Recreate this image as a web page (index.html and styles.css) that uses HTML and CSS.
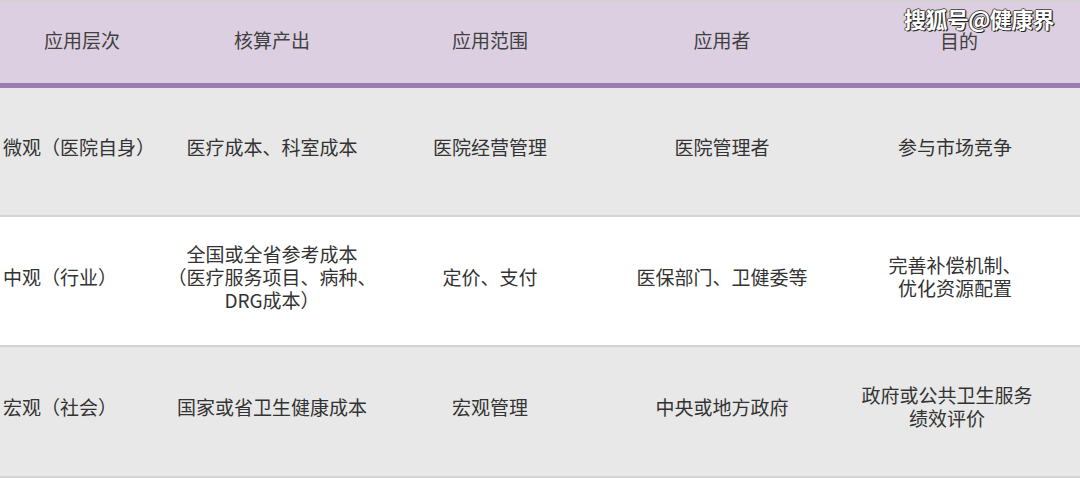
FILE: index.html
```html
<!DOCTYPE html>
<html lang="zh-CN">
<head>
<meta charset="utf-8">
<link rel="stylesheet" href="styles.css">
</head>
<body>
<div class="page">
  <table class="grid">
    <colgroup>
      <col class="c1"><col class="c2"><col class="c3"><col class="c4"><col class="c5">
    </colgroup>
    <thead>
      <tr class="head">
        <th>应用层次</th>
        <th>核算产出</th>
        <th>应用范围</th>
        <th>应用者</th>
        <th class="last">目的</th>
      </tr>
    </thead>
    <tbody>
      <tr class="row gray r1">
        <td class="first">微观（医院自身）</td>
        <td>医疗成本、科室成本</td>
        <td>医院经营管理</td>
        <td>医院管理者</td>
        <td class="last">参与市场竞争</td>
      </tr>
      <tr class="row white">
        <td class="first">中观（行业）</td>
        <td>全国或全省参考成本<br>（医疗服务项目、病种、<br>DRG成本）</td>
        <td>定价、支付</td>
        <td>医保部门、卫健委等</td>
        <td class="last">完善补偿机制、<br>优化资源配置</td>
      </tr>
      <tr class="row gray r3">
        <td class="first">宏观（社会）</td>
        <td>国家或省卫生健康成本</td>
        <td>宏观管理</td>
        <td>中央或地方政府</td>
        <td class="last shift">政府或公共卫生服务<br>绩效评价</td>
      </tr>
    </tbody>
  </table>
  <div class="watermark">搜狐号@健康界</div>
</div>
</body>
</html>
```

FILE: styles.css
```css
* { box-sizing: border-box; }
html, body { margin: 0; padding: 0; background: #ffffff; }
body {
  font-family: "Noto Sans CJK SC", "Noto Sans", sans-serif;
  color: #333333;
}
.page {
  position: relative;
  width: 1080px;
  height: 478px;
  overflow: hidden;
  border-top: 2px solid #d2d2d2;
}
.grid {
  width: 1080px;
  border-collapse: collapse;
  table-layout: fixed;
}
.c1 { width: 164px; }
.c2 { width: 216px; }
.c3 { width: 220px; }
.c4 { width: 244px; }
.c5 { width: 236px; }

.head th {
  height: 83px;
  background: #dccfe2;
  border-bottom: 5px solid #9b7bb0;
  font-weight: normal;
  font-size: 19px;
  line-height: 23px;
  color: #404040;
  text-align: center;
  vertical-align: middle;
  padding: 0 0 5px 0;
}
.head th.last { padding: 0 6px 4px 0; }

.row td {
  font-size: 19px;
  line-height: 23px;
  text-align: center;
  vertical-align: middle;
  padding: 0 0 10px 0;
  border-bottom: 2px solid #d3d3d3;
}
.row.gray td { background: #e8e8e8; }
.row.white td { background: #ffffff; }
.r1 td { height: 131px; }
.row.white td { height: 130px; }
.r3 td { height: 131px; border-bottom-width: 3px; }
.row td.first { text-align: left; padding-left: 3px; }
.row td.last { padding-right: 14px; }
.row td.last.shift { padding-right: 30px; }

.watermark {
  position: absolute;
  top: 2px;
  right: 26px;
  font-size: 22px;
  font-weight: bold;
  line-height: 28px;
  color: #ffffff;
  letter-spacing: -0.6px;
  text-shadow: 1px 1px 0 #222, -1px 0 0 #444, 0 -1px 0 #555, 1px 0 1px #222;
}
```
